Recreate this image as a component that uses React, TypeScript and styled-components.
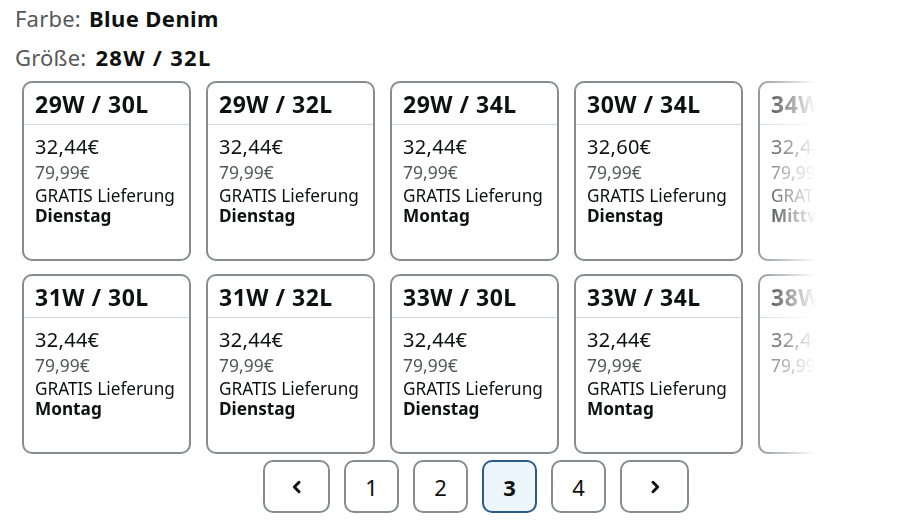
import React from "react";
import styled, { createGlobalStyle } from "styled-components";

const Global = createGlobalStyle`
  html, body { margin: 0; padding: 0; background: #fff; }
  body { font-family: "Noto Sans", "Open Sans", sans-serif; color: #0f1111; }
`;

const Page = styled.div`
  width: 916px;
  height: 526px;
  padding: 4px 0 0 15px;
  box-sizing: border-box;
  display: flex;
  flex-direction: column;
`;

const Line = styled.div<{ $mb?: number }>`
  font-size: 22px;
  line-height: 28px;
  height: 28px;
  margin-bottom: ${(p) => p.$mb ?? 0}px;
  color: #565959;
  letter-spacing: 0.2px;
  white-space: nowrap;
`;

const Value = styled.b<{ $ls: number }>`
  color: #0f1111;
  font-weight: 700;
  letter-spacing: ${(p) => p.$ls}px;
  margin-left: 2px;
`;

const Viewport = styled.div`
  margin-left: 7px;
  width: 794px;
  overflow: hidden;
  -webkit-mask-image: linear-gradient(to right, #000 0, #000 728px, transparent 794px);
  mask-image: linear-gradient(to right, #000 0, #000 728px, transparent 794px);
`;

const Grid = styled.div`
  display: grid;
  grid-template-columns: repeat(5, 169px);
  column-gap: 15px;
  row-gap: 13px;
  width: max-content;
`;

const Card = styled.div`
  box-sizing: border-box;
  height: 180px;
  border: 2px solid #888c8c;
  border-radius: 10px;
  background: #fff;
  display: flex;
  flex-direction: column;
`;

const CardHead = styled.div`
  height: 42px;
  box-sizing: border-box;
  padding: 7px 11px 0;
  border-bottom: 1px solid #d5d9d9;
  font-size: 23px;
  font-weight: 700;
  line-height: 28px;
  letter-spacing: 0.5px;
  white-space: nowrap;
`;

const CardBody = styled.div`
  padding: 9px 11px 0;
  display: flex;
  flex-direction: column;
  white-space: nowrap;
`;

const Price = styled.div`
  font-size: 20px;
  line-height: 26px;
  letter-spacing: 0.3px;
`;

const OldPrice = styled.div`
  font-size: 17.5px;
  line-height: 24px;
  color: #565959;
`;

const Delivery = styled.div<{ $bold?: boolean; $mt?: number }>`
  margin-top: ${(p) => p.$mt ?? 0}px;
  height: 20px;
  font-size: 17.2px;
  line-height: 20px;
  font-weight: ${(p) => (p.$bold ? 700 : 400)};
`;

const Pager = styled.div`
  display: flex;
  gap: 14px;
  margin: 6px 0 0 248px;
`;

const PageBtn = styled.button<{ $w: number; $active?: boolean }>`
  width: ${(p) => p.$w}px;
  height: 53px;
  box-sizing: border-box;
  border: ${(p) => (p.$active ? "2px solid #2a5b8c" : "2px solid #888c8c")};
  border-radius: 10px;
  background: ${(p) => (p.$active ? "#edf6fd" : "#fff")};
  font-family: inherit;
  font-size: 22px;
  font-weight: ${(p) => (p.$active ? 700 : 400)};
  color: #0f1111;
  display: flex;
  align-items: center;
  justify-content: center;
  padding: 0;
`;

type Item = { size: string; price: string; old: string; day?: string };

const items: Item[] = [
  { size: "29W / 30L", price: "32,44€", old: "79,99€", day: "Dienstag" },
  { size: "29W / 32L", price: "32,44€", old: "79,99€", day: "Dienstag" },
  { size: "29W / 34L", price: "32,44€", old: "79,99€", day: "Montag" },
  { size: "30W / 34L", price: "32,60€", old: "79,99€", day: "Dienstag" },
  { size: "34W / 30L", price: "32,44€", old: "79,99€", day: "Mittwoch" },
  { size: "31W / 30L", price: "32,44€", old: "79,99€", day: "Montag" },
  { size: "31W / 32L", price: "32,44€", old: "79,99€", day: "Dienstag" },
  { size: "33W / 30L", price: "32,44€", old: "79,99€", day: "Dienstag" },
  { size: "33W / 34L", price: "32,44€", old: "79,99€", day: "Montag" },
  { size: "38W / 30L", price: "32,44€", old: "79,99€" },
];

const Chevron = ({ dir }: { dir: "l" | "r" }) => (
  <svg width="14" height="14" viewBox="0 0 14 14">
    <path
      d={dir === "l" ? "M9 2.3 L4.3 7 L9 11.7" : "M5 2.3 L9.7 7 L5 11.7"}
      fill="none"
      stroke="#0f1111"
      strokeWidth="3"
      strokeLinecap="round"
      strokeLinejoin="round"
    />
  </svg>
);

const SizeCard = ({ it }: { it: Item }) => (
  <Card>
    <CardHead>{it.size}</CardHead>
    <CardBody>
      <Price>{it.price}</Price>
      <OldPrice>{it.old}</OldPrice>
      {it.day && (
        <>
          <Delivery $mt={2}>GRATIS Lieferung</Delivery>
          <Delivery $bold>{it.day}</Delivery>
        </>
      )}
    </CardBody>
  </Card>
);

export default function App() {
  return (
    <>
      <Global />
      <Page>
        <Line $mb={11}>
          Farbe:<Value $ls={0.4}> Blue Denim</Value>
        </Line>
        <Line $mb={10}>
          Größe:<Value $ls={1.3}> 28W / 32L</Value>
        </Line>
        <Viewport>
          <Grid>
            {items.map((it, i) => (
              <SizeCard key={i} it={it} />
            ))}
          </Grid>
        </Viewport>
        <Pager>
          <PageBtn $w={67} aria-label="Zurück"><Chevron dir="l" /></PageBtn>
          <PageBtn $w={55}>1</PageBtn>
          <PageBtn $w={55}>2</PageBtn>
          <PageBtn $w={55} $active>3</PageBtn>
          <PageBtn $w={55}>4</PageBtn>
          <PageBtn $w={69} aria-label="Weiter"><Chevron dir="r" /></PageBtn>
        </Pager>
      </Page>
    </>
  );
}
